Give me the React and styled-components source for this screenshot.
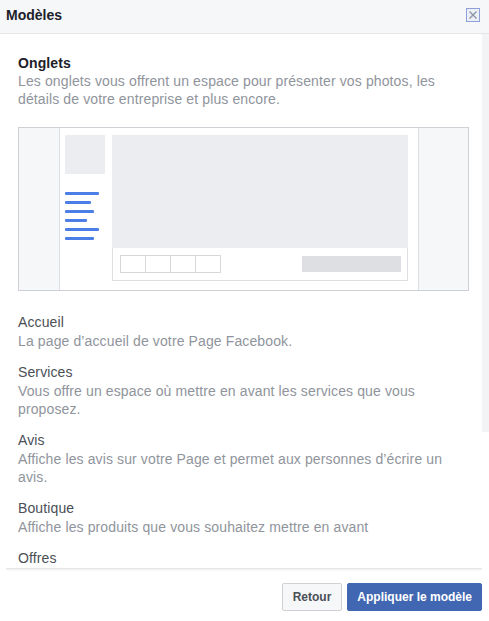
import React from 'react';
import styled, { createGlobalStyle } from 'styled-components';

const GlobalStyle = createGlobalStyle`
    html, body {
        margin: 0;
        padding: 0;
        background: #ffffff;
    }
    body {
        font-family: "Liberation Sans", Arial, Helvetica, sans-serif;
        -webkit-font-smoothing: antialiased;
    }
`;

const Dialog = styled.div`
    width: 489px;
    height: 621px;
    display: flex;
    flex-direction: column;
    background: #ffffff;
    overflow: hidden;
`;

const Header = styled.div`
    height: 33px;
    flex: none;
    display: flex;
    align-items: center;
    justify-content: space-between;
    padding: 0 9px 0 6px;
    background: #f6f7f9;
    border-bottom: 1px solid #e5e5e5;
`;

const HeaderTitle = styled.div`
    font-size: 14px;
    font-weight: bold;
    color: #1d2129;
    margin-top: -4px;
`;

const CloseButton = styled.div`
    width: 14px;
    height: 14px;
    margin-top: -4px;
    display: flex;
    align-items: center;
    justify-content: center;
`;

const Body = styled.div`
    flex: 1;
    min-height: 0;
    display: flex;
`;

const ScrollArea = styled.div`
    flex: 1;
    overflow: hidden;
    padding: 20px 13px 0 18px;
`;

const ScrollTrack = styled.div`
    width: 7px;
    flex: none;
`;

const ScrollThumb = styled.div`
    height: 398px;
    background: #f3f4f6;
`;

const Divider = styled.div`
    flex: none;
    height: 1px;
    margin: 0 7px 0 6px;
    background: #e4e5e8;
    box-shadow: 0 1px 2px rgba(0, 0, 0, 0.1);
`;

const Heading = styled.div`
    font-size: 14px;
    line-height: 18px;
    font-weight: bold;
    color: #1d2129;
    letter-spacing: 0.1px;
`;

const Description = styled.div`
    font-size: 14px;
    line-height: 18px;
    color: #90949c;
    letter-spacing: 0.12px;
`;

const Preview = styled.div`
    margin: 19px 0 22px;
    height: 162px;
    border: 1px solid #cdd0d4;
    display: grid;
    grid-template-columns: 41px 1fr 50px;
`;

const SidePanel = styled.div`
    background: #f6f7f9;
    border-${p => p.side}: 1px solid #dddfe2;
`;

const PageArea = styled.div`
    display: grid;
    grid-template-columns: 40px 296px;
    column-gap: 7px;
    padding: 7px 0 0 5px;
`;

const LeftColumn = styled.div`
    display: flex;
    flex-direction: column;
`;

const ProfilePic = styled.div`
    height: 39px;
    background: #ebedf0;
`;

const NavLines = styled.div`
    display: flex;
    flex-direction: column;
    gap: 6px;
    margin-top: 18px;
`;

const NavLine = styled.div`
    height: 3px;
    width: ${p => p.w}px;
    background: #4c7ee8;
    border-radius: 1px;
`;

const MainColumn = styled.div`
    display: flex;
    flex-direction: column;
`;

const Cover = styled.div`
    height: 113px;
    background: #ebedf0;
`;

const TabBar = styled.div`
    height: 32px;
    border: 1px solid #dddfe2;
    border-top: none;
    display: flex;
    align-items: center;
    justify-content: space-between;
    padding: 0 6px 0 7px;
`;

const Tabs = styled.div`
    display: flex;
    height: 16px;
    border: 1px solid #d6d8dc;
`;

const Tab = styled.div`
    width: 24px;
    & + & {
        border-left: 1px solid #d6d8dc;
    }
`;

const ActionBar = styled.div`
    width: 99px;
    height: 16px;
    background: #dddfe2;
`;

const Item = styled.div`
    margin-bottom: 13px;
`;

const ItemTitle = styled.div`
    font-size: 14px;
    line-height: 18px;
    color: #4b4f56;
    margin-bottom: 1px;
    letter-spacing: 0.12px;
`;

const Footer = styled.div`
    flex: none;
    height: 52px;
    display: flex;
    justify-content: flex-end;
    align-items: flex-start;
    gap: 5px;
    padding: 14px 7px 0 0;
    box-sizing: border-box;
`;

const Button = styled.button`
    height: 28px;
    padding: 0 ${p => (p.primary ? 9 : 10)}px;
    font-family: inherit;
    font-size: 12px;
    font-weight: bold;
    border-radius: 2px;
    border: 1px solid ${p => (p.primary ? '#4267b2' : '#ced0d4')};
    background: ${p => (p.primary ? '#4267b2' : '#f6f7f9')};
    color: ${p => (p.primary ? '#ffffff' : '#4b4f56')};
    cursor: pointer;
`;

const items = [
    { title: 'Accueil', text: "La page d\u2019accueil de votre Page Facebook." },
    { title: 'Services', text: 'Vous offre un espace où mettre en avant les services que vous proposez.' },
    { title: 'Avis', text: "Affiche les avis sur votre Page et permet aux personnes d\u2019écrire un avis." },
    { title: 'Boutique', text: 'Affiche les produits que vous souhaitez mettre en avant' },
    { title: 'Offres' },
];

const navWidths = [34, 26, 29, 22, 34, 29];

const App = () => {
    return (
        <>
            <GlobalStyle />
            <Dialog>
                <Header>
                    <HeaderTitle>Modèles</HeaderTitle>
                    <CloseButton>
                        <svg width="14" height="14" viewBox="0 0 14 14">
                            <rect x="0.5" y="0.5" width="13" height="13" fill="#eef0f8" stroke="#8f9fd9" />
                            <path d="M3.5 3.5 L10.5 10.5 M10.5 3.5 L3.5 10.5" stroke="#8d94a5" strokeWidth="1.4" />
                        </svg>
                    </CloseButton>
                </Header>
                <Body>
                    <ScrollArea>
                        <Heading>Onglets</Heading>
                        <Description>
                            Les onglets vous offrent un espace pour présenter vos photos, les détails de votre entreprise et plus encore.
                        </Description>
                        <Preview>
                            <SidePanel side="right" />
                            <PageArea>
                                <LeftColumn>
                                    <ProfilePic />
                                    <NavLines>
                                        {navWidths.map((w, i) => <NavLine key={i} w={w} />)}
                                    </NavLines>
                                </LeftColumn>
                                <MainColumn>
                                    <Cover />
                                    <TabBar>
                                        <Tabs>
                                            <Tab /><Tab /><Tab /><Tab />
                                        </Tabs>
                                        <ActionBar />
                                    </TabBar>
                                </MainColumn>
                            </PageArea>
                            <SidePanel side="left" />
                        </Preview>
                        {items.map(item => (
                            <Item key={item.title}>
                                <ItemTitle>{item.title}</ItemTitle>
                                {item.text && <Description>{item.text}</Description>}
                            </Item>
                        ))}
                    </ScrollArea>
                    <ScrollTrack>
                        <ScrollThumb />
                    </ScrollTrack>
                </Body>
                <Divider />
                <Footer>
                    <Button>Retour</Button>
                    <Button primary>Appliquer le modèle</Button>
                </Footer>
            </Dialog>
        </>
    );
};

export default App;
